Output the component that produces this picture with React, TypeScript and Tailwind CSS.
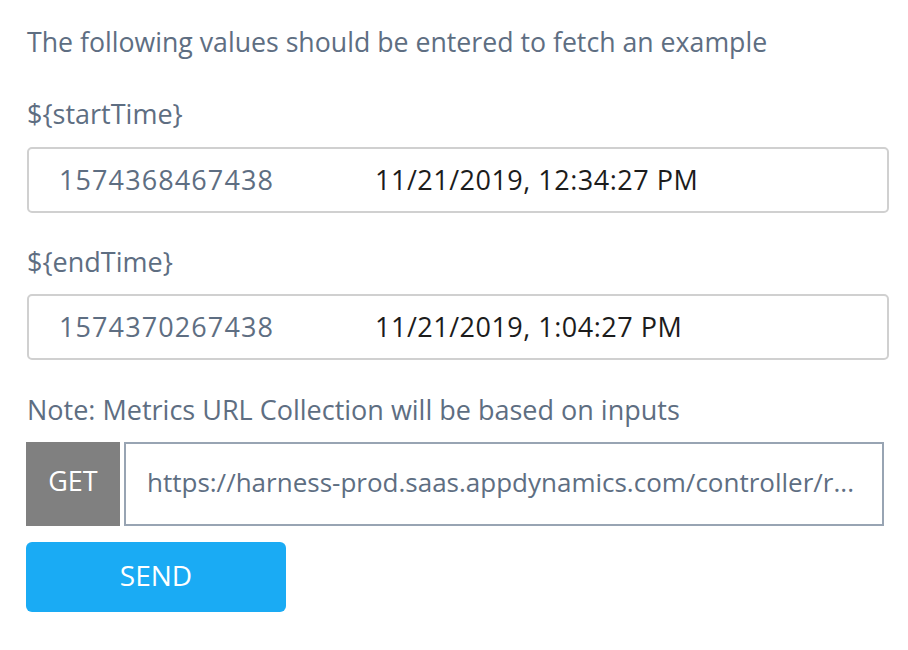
export default function App() {
  const font = { fontFamily: "'Open Sans', 'Noto Sans', sans-serif" };
  return (
    <div className="min-h-[650px] w-[908px] bg-white pl-[27px] pr-[19px] pt-[27px]" style={font}>
      <div className="flex flex-col">
        <p className="h-[30px] text-[26.7px] leading-[30px] text-[#5e6e82]">
          The following values should be entered to fetch an example
        </p>

        <p className="mt-[42px] h-[30px] text-[27px] leading-[30px] text-[#5e6e82]">{"${startTime}"}</p>
        <div className="mt-[18px] flex h-[66px] items-center rounded-[5px] border-2 border-[#d0d0d0] pl-[30px]">
          <span className="w-[316px] text-[27px] tracking-[1.1px] text-[#5e6e82]">1574368467438</span>
          <span className="text-[27px] tracking-[0.5px] text-[#1c1c1c]">11/21/2019, 12:34:27 PM</span>
        </div>

        <p className="mt-[34px] h-[30px] text-[27px] leading-[30px] text-[#5e6e82]">{"${endTime}"}</p>
        <div className="mt-[17px] flex h-[66px] items-center rounded-[5px] border-2 border-[#d0d0d0] pl-[30px]">
          <span className="w-[316px] text-[27px] tracking-[1.1px] text-[#5e6e82]">1574370267438</span>
          <span className="text-[27px] tracking-[0.5px] text-[#1c1c1c]">11/21/2019, 1:04:27 PM</span>
        </div>

        <p className="mt-[35px] h-[30px] text-[27px] leading-[30px] text-[#5e6e82]">
          Note: Metrics URL Collection will be based on inputs
        </p>

        <div className="-ml-px mt-[17px] flex h-[84px] gap-[4px] pr-[5px]">
          <div className="flex w-[94px] items-center justify-center bg-[#808080] pb-[6px] text-[27px] text-white">GET</div>
          <div className="flex min-w-0 flex-1 items-center border-2 border-[#98a4b3] pb-[3px] pl-[21px]">
            <span className="whitespace-nowrap text-[26px] text-[#5e6e82]">
              https://harness-prod.saas.appdynamics.com/controller/r...
            </span>
          </div>
        </div>

        <button className="-ml-px mt-[16px] flex h-[70px] w-[260px] items-center justify-center rounded-[6px] bg-[#1aabf4] pb-[4px] text-[28px] text-white">
          SEND
        </button>
      </div>
    </div>
  );
}
